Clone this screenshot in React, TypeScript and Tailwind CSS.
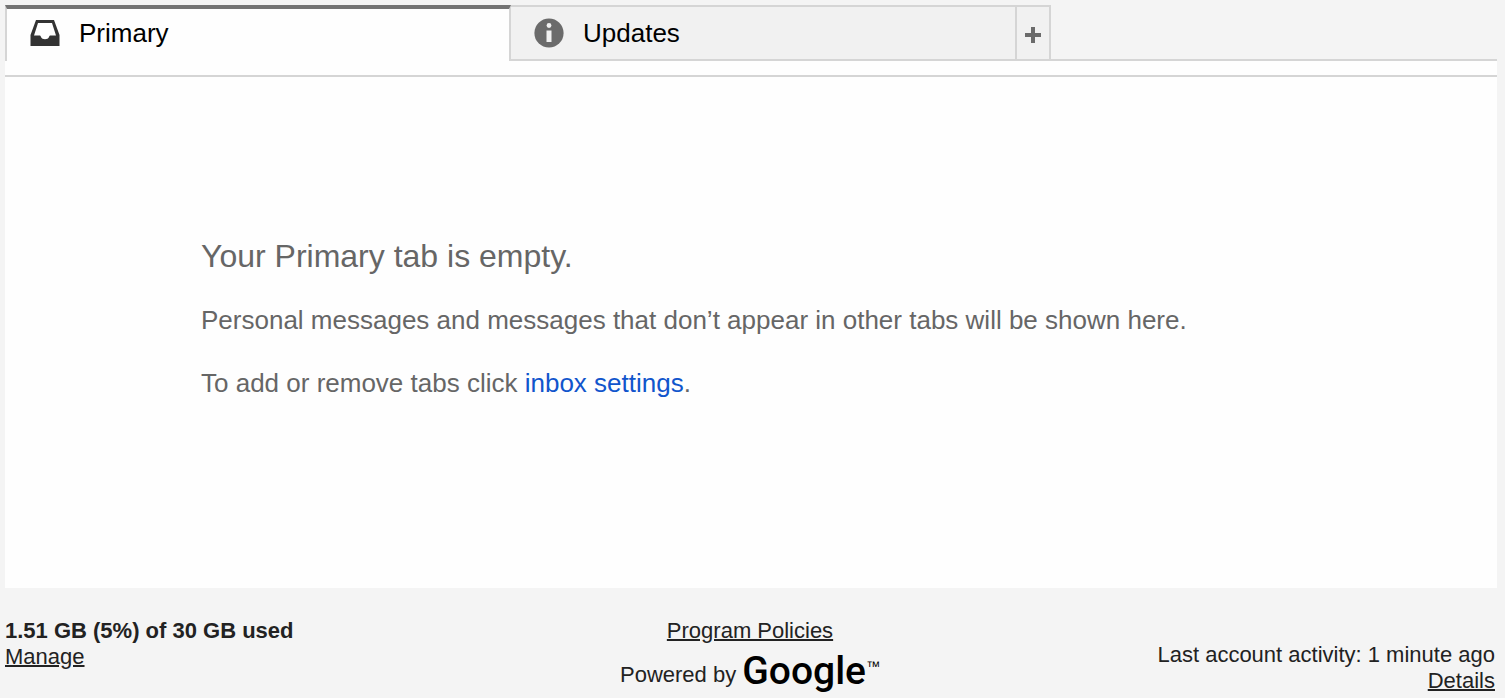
import React from "react";

function InboxIcon() {
  return (
    <svg aria-hidden="true" viewBox="0 0 30 26" className="h-[26px] w-[30px] shrink-0" fill="#333333">
      <path
        fillRule="evenodd"
        d="M6 0H24L29.5 15V26H0.5V15ZM8 3L4 15.500H9.500C10.500 15.500 10.500 16 11 17C12 20 18 20 19 17C19.500 16 19.500 15.500 20.500 15.500H26L22 3Z"
      />
    </svg>
  );
}

function InfoIcon() {
  return (
    <svg aria-hidden="true" viewBox="0 0 30 30" className="size-[30px] shrink-0">
      <circle cx="15" cy="15" r="14.600" fill="#6b6b6b" />
      <circle cx="15" cy="7.500" r="2.400" fill="#f1f1f1" />
      <rect x="12.500" y="12.500" width="5" height="11.500" fill="#f1f1f1" />
    </svg>
  );
}

function PlusIcon() {
  return (
    <svg aria-hidden="true" viewBox="0 0 16 16" className="size-4" fill="#6b6b6b">
      <path d="M6 0H10V6H16V10H10V16H6V10H0V6H6Z" />
    </svg>
  );
}

export default function App() {
  return (
    <div className="min-h-screen bg-[#f4f4f4] pt-[5px] pr-2 pl-[5px] font-['Liberation_Sans',Arial,sans-serif] text-[#222222]">
      <main className="bg-[#fefefe]">
        <div role="tablist" aria-label="Inbox categories" className="flex h-14 text-[26px] leading-8 text-black">
          <button
            role="tab"
            aria-selected="true"
            className="flex min-w-0 basis-[506px] items-center gap-[19px] border-x-2 border-t-4 border-x-[#d5d5d5] border-t-[#737373] pb-1 pl-[23px]"
          >
            <InboxIcon />
            Primary
          </button>
          <button
            role="tab"
            aria-selected="false"
            className="flex min-w-0 basis-[504px] items-center gap-[19px] border-y-2 border-[#d5d5d5] bg-[#f1f1f1] pl-[23px]"
          >
            <InfoIcon />
            Updates
          </button>
          <button
            aria-label="Add tab"
            className="flex w-9 shrink-0 items-center justify-center border-2 border-[#d5d5d5] bg-[#f1f1f1] pt-1"
          >
            <PlusIcon />
          </button>
          <div className="flex-1 border-b-2 border-[#d5d5d5] bg-[#f4f4f4]" />
        </div>
        <div className="h-4 border-b-2 border-[#d5d5d5]" />
        <section className="px-[196px] pt-[159px] pb-[189px] text-[26px] leading-8 text-[#666666]">
          <h1 className="text-[32px] leading-10">Your Primary tab is empty.</h1>
          <p className="pt-7">Personal messages and messages that don’t appear in other tabs will be shown here.</p>
          <p className="pt-[31px]">
            To add or remove tabs click{" "}
            <a href="#settings" className="text-[#1155cc]">
              inbox settings
            </a>
            .
          </p>
        </section>
      </main>
      <footer className="grid grid-cols-3 pt-[30px] pr-0.5 text-[22px] leading-[26px]">
        <div>
          <strong className="block font-bold">1.51 GB (5%) of 30 GB used</strong>
          <a href="#manage" className="underline decoration-2">
            Manage
          </a>
        </div>
        <div className="text-center">
          <a href="#policies" className="underline decoration-2">
            Program Policies
          </a>
          <div className="flex items-center justify-center gap-1.5 pt-1.5">
            <span className="pt-2">Powered by</span>
            <span className="flex items-start text-black">
              <span className="font-[Roboto,sans-serif] text-[39px] leading-[42px] font-medium">Google</span>
              <span className="pt-2 text-[14px] leading-4">™</span>
            </span>
          </div>
        </div>
        <div className="pt-6 text-right">
          <p>Last account activity: 1 minute ago</p>
          <a href="#details" className="underline decoration-2">
            Details
          </a>
        </div>
      </footer>
    </div>
  );
}
